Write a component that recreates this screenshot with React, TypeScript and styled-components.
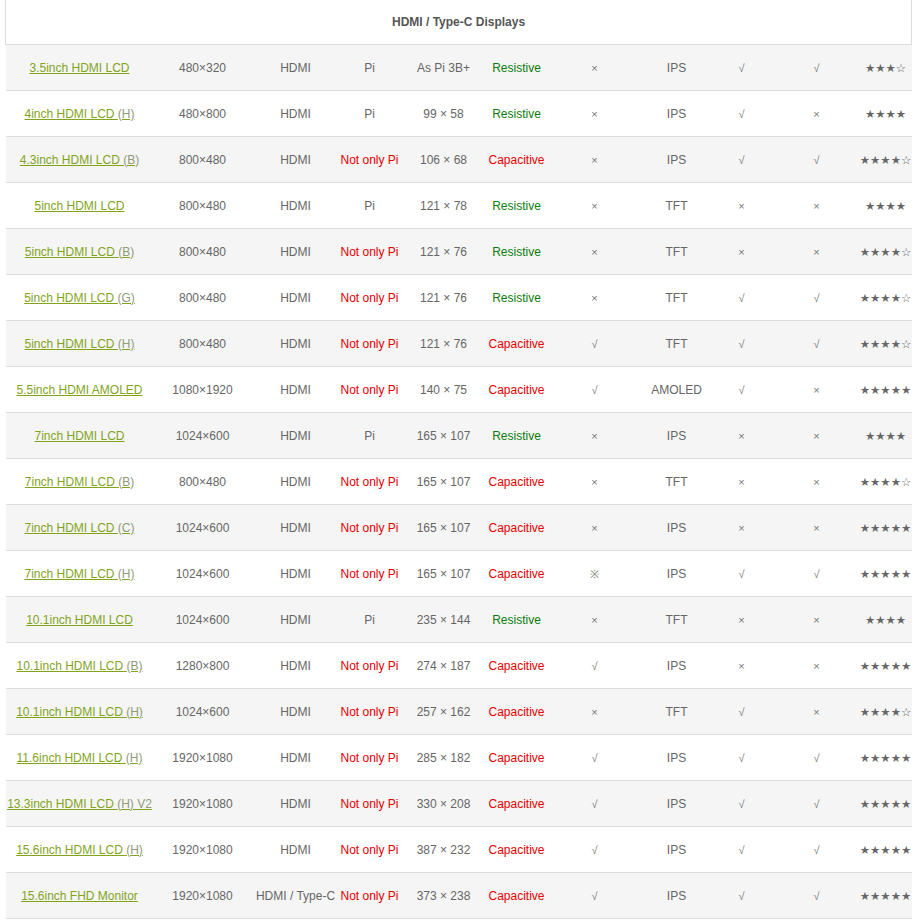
import styled, { createGlobalStyle } from 'styled-components';

type Row = {
  name: string;
  suffix?: string;
  res: string;
  iface: string;
  host: string;
  size: string;
  touch: 'Resistive' | 'Capacitive';
  a: string;
  panel: string;
  b: string;
  c: string;
  stars: string;
};

const rows: Row[] = [
  { name: '3.5inch HDMI LCD', res: '480×320', iface: 'HDMI', host: 'Pi', size: 'As Pi 3B+', touch: 'Resistive', a: '×', panel: 'IPS', b: '√', c: '√', stars: '★★★☆' },
  { name: '4inch HDMI LCD ', suffix: '(H)', res: '480×800', iface: 'HDMI', host: 'Pi', size: '99 × 58', touch: 'Resistive', a: '×', panel: 'IPS', b: '√', c: '×', stars: '★★★★' },
  { name: '4.3inch HDMI LCD ', suffix: '(B)', res: '800×480', iface: 'HDMI', host: 'Not only Pi', size: '106 × 68', touch: 'Capacitive', a: '×', panel: 'IPS', b: '√', c: '√', stars: '★★★★☆' },
  { name: '5inch HDMI LCD', res: '800×480', iface: 'HDMI', host: 'Pi', size: '121 × 78', touch: 'Resistive', a: '×', panel: 'TFT', b: '×', c: '×', stars: '★★★★' },
  { name: '5inch HDMI LCD ', suffix: '(B)', res: '800×480', iface: 'HDMI', host: 'Not only Pi', size: '121 × 76', touch: 'Resistive', a: '×', panel: 'TFT', b: '×', c: '×', stars: '★★★★☆' },
  { name: '5inch HDMI LCD ', suffix: '(G)', res: '800×480', iface: 'HDMI', host: 'Not only Pi', size: '121 × 76', touch: 'Resistive', a: '×', panel: 'TFT', b: '√', c: '√', stars: '★★★★☆' },
  { name: '5inch HDMI LCD ', suffix: '(H)', res: '800×480', iface: 'HDMI', host: 'Not only Pi', size: '121 × 76', touch: 'Capacitive', a: '√', panel: 'TFT', b: '√', c: '√', stars: '★★★★☆' },
  { name: '5.5inch HDMI AMOLED', res: '1080×1920', iface: 'HDMI', host: 'Not only Pi', size: '140 × 75', touch: 'Capacitive', a: '√', panel: 'AMOLED', b: '√', c: '×', stars: '★★★★★' },
  { name: '7inch HDMI LCD', res: '1024×600', iface: 'HDMI', host: 'Pi', size: '165 × 107', touch: 'Resistive', a: '×', panel: 'IPS', b: '×', c: '×', stars: '★★★★' },
  { name: '7inch HDMI LCD ', suffix: '(B)', res: '800×480', iface: 'HDMI', host: 'Not only Pi', size: '165 × 107', touch: 'Capacitive', a: '×', panel: 'TFT', b: '×', c: '×', stars: '★★★★☆' },
  { name: '7inch HDMI LCD ', suffix: '(C)', res: '1024×600', iface: 'HDMI', host: 'Not only Pi', size: '165 × 107', touch: 'Capacitive', a: '×', panel: 'IPS', b: '×', c: '×', stars: '★★★★★' },
  { name: '7inch HDMI LCD ', suffix: '(H)', res: '1024×600', iface: 'HDMI', host: 'Not only Pi', size: '165 × 107', touch: 'Capacitive', a: '※', panel: 'IPS', b: '√', c: '√', stars: '★★★★★' },
  { name: '10.1inch HDMI LCD', res: '1024×600', iface: 'HDMI', host: 'Pi', size: '235 × 144', touch: 'Resistive', a: '×', panel: 'TFT', b: '×', c: '×', stars: '★★★★' },
  { name: '10.1inch HDMI LCD ', suffix: '(B)', res: '1280×800', iface: 'HDMI', host: 'Not only Pi', size: '274 × 187', touch: 'Capacitive', a: '√', panel: 'IPS', b: '×', c: '×', stars: '★★★★★' },
  { name: '10.1inch HDMI LCD ', suffix: '(H)', res: '1024×600', iface: 'HDMI', host: 'Not only Pi', size: '257 × 162', touch: 'Capacitive', a: '×', panel: 'TFT', b: '√', c: '×', stars: '★★★★☆' },
  { name: '11.6inch HDMI LCD ', suffix: '(H)', res: '1920×1080', iface: 'HDMI', host: 'Not only Pi', size: '285 × 182', touch: 'Capacitive', a: '√', panel: 'IPS', b: '√', c: '√', stars: '★★★★★' },
  { name: '13.3inch HDMI LCD ', suffix: '(H) V2', res: '1920×1080', iface: 'HDMI', host: 'Not only Pi', size: '330 × 208', touch: 'Capacitive', a: '√', panel: 'IPS', b: '√', c: '√', stars: '★★★★★' },
  { name: '15.6inch HDMI LCD ', suffix: '(H)', res: '1920×1080', iface: 'HDMI', host: 'Not only Pi', size: '387 × 232', touch: 'Capacitive', a: '√', panel: 'IPS', b: '√', c: '√', stars: '★★★★★' },
  { name: '15.6inch FHD Monitor', res: '1920×1080', iface: 'HDMI / Type-C', host: 'Not only Pi', size: '373 × 238', touch: 'Capacitive', a: '√', panel: 'IPS', b: '√', c: '√', stars: '★★★★★' },
];

const widths = [148, 98, 88, 60, 88, 58, 98, 66, 64, 86, 52];

const App = () => {
  return (
    <Page>
      <GlobalStyle />
      <Table>
        <colgroup>
          {widths.map((w, i) => (
            <col key={i} style={{ width: w }} />
          ))}
        </colgroup>
        <thead>
          <tr>
            <HeadCell colSpan={11}>HDMI / Type-C Displays</HeadCell>
          </tr>
        </thead>
        <tbody>
          {rows.map((r, i) => (
            <Row key={i} $shaded={i % 2 === 0}>
              <Cell>
                <Link href="#">
                  {r.name}
                  {r.suffix && <Suffix>{r.suffix}</Suffix>}
                </Link>
              </Cell>
              <Cell>{r.res}</Cell>
              <Cell>{r.iface}</Cell>
              <Cell $tone={r.host === 'Pi' ? undefined : 'red'}>{r.host}</Cell>
              <Cell>{r.size}</Cell>
              <Cell $tone={r.touch === 'Resistive' ? 'green' : 'red'}>{r.touch}</Cell>
              <Mark>{r.a}</Mark>
              <Cell>{r.panel}</Cell>
              <Mark>{r.b}</Mark>
              <Mark>{r.c}</Mark>
              <Stars>{r.stars}</Stars>
            </Row>
          ))}
        </tbody>
      </Table>
    </Page>
  );
};

const GlobalStyle = createGlobalStyle`
  body {
    margin: 0;
    background: #fff;
    font-family: "Liberation Sans", Arial, sans-serif;
  }
`
const Page = styled.div`
  padding: 0 5px;
  width: 906px;
`
const Table = styled.table`
  width: 906px;
  table-layout: fixed;
  border-collapse: collapse;
  font-size: 12px;
  color: #666;
`
const HeadCell = styled.th`
  height: 44px;
  padding: 0;
  border-left: 1px solid #ddd;
  border-right: 1px solid #ddd;
  border-bottom: 1px solid #ddd;
  font-weight: bold;
  color: #555;
  text-align: center;
  vertical-align: middle;
`
const Row = styled.tr<{ $shaded: boolean }>`
  background: ${p => (p.$shaded ? '#f5f5f5' : '#fff')};
`
const Cell = styled.td<{ $tone?: 'red' | 'green' }>`
  height: 45px;
  padding: 0;
  border-bottom: 1px solid #ddd;
  text-align: center;
  vertical-align: middle;
  white-space: nowrap;
  color: ${p => (p.$tone === 'red' ? '#e60000' : p.$tone === 'green' ? '#0a7d0a' : '#666')};
`
const Mark = styled(Cell)`
  font-size: 11px;
  color: #777;
`
const Stars = styled(Cell)`
  font-family: "DejaVu Sans", sans-serif;
  font-size: 11.5px;
  color: #666;
  overflow: visible;
`
const Link = styled.a`
  color: #82a41c;
  text-decoration: underline;
`
const Suffix = styled.span`
  color: #8f9a78;
`

export default App;
